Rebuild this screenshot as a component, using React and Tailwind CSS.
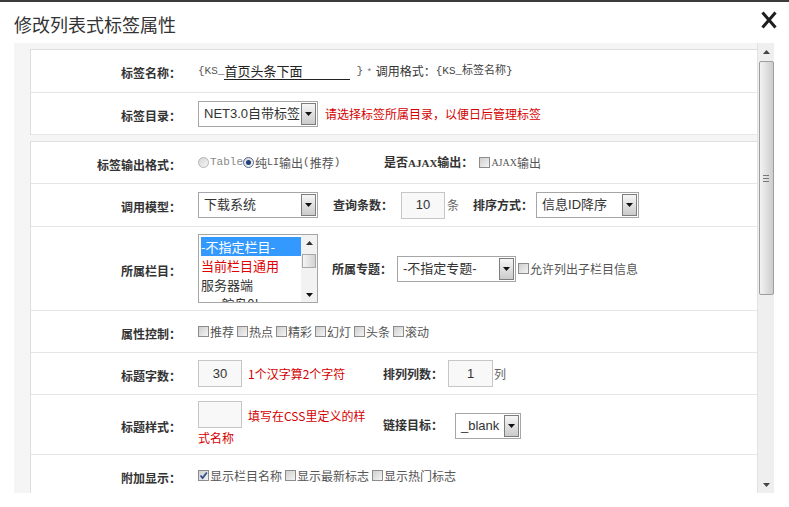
import React from "react";

const mono = "font-['Liberation_Mono','Noto_Sans_CJK_SC',monospace]";

function Arrow() {
  return (
    <svg width="7" height="4" viewBox="0 0 7 4">
      <path d="M0 0h7L3.5 4z" fill="#111" />
    </svg>
  );
}

function Select({ w, value }) {
  return (
    <div className={`flex h-[26px] shrink-0 border border-[#a6a6a6] bg-white ${w}`}>
      <div className="flex-1 overflow-hidden whitespace-nowrap pl-[5px] font-['Liberation_Sans','Noto_Sans_CJK_SC',sans-serif] text-[13px] leading-[24px] text-[#333]">
        {value}
      </div>
      <div className="m-px flex w-[15px] items-center justify-center border border-[#7d7d7d] bg-linear-to-b from-[#f6f6f6] to-[#cbcbcb]">
        <Arrow />
      </div>
    </div>
  );
}

function Input({ w = "w-[44px]", value }) {
  return (
    <div
      className={`flex h-[27px] shrink-0 items-center justify-center border border-[#c6c6c6] bg-[#f8f8f8] font-['Liberation_Sans',sans-serif] text-[13px] text-[#333] ${w}`}
    >
      {value}
    </div>
  );
}

function Check({ checked }) {
  return (
    <span className="mr-px inline-flex h-[11px] w-[11px] shrink-0 items-center justify-center border border-[#8c8c8c] bg-linear-to-br from-[#cfcfcf] to-[#f4f4f4]">
      {checked && (
        <svg width="9" height="9" viewBox="0 0 9 9">
          <path d="M1.5 4.5L3.6 7L7.8 1.5" stroke="#2c4f8e" strokeWidth="1.8" fill="none" />
        </svg>
      )}
    </span>
  );
}

function Radio({ checked }) {
  return (
    <span
      className={`inline-flex h-[11px] w-[11px] shrink-0 items-center justify-center rounded-full border bg-linear-to-br from-[#d6d6d6] to-[#f6f6f6] ${
        checked ? "border-[#56698c]" : "border-[#b4b4b4]"
      }`}
    >
      {checked && <span className="h-[5px] w-[5px] rounded-full bg-[#1d3f7c]" />}
    </span>
  );
}

function Label({ children, className = "" }) {
  return (
    <span className={`shrink-0 whitespace-nowrap text-[12px] font-bold text-[#333] ${className}`}>
      {children}
    </span>
  );
}

function Row({ label, h, children }) {
  return (
    <div className={`flex items-center border-b border-[#e6e6e6] ${h}`}>
      <div className="w-[160px] shrink-0 pr-[10px] text-right">
        <Label>{label}</Label>
      </div>
      <div className="flex flex-1 items-center pl-[7px] text-[12px] text-[#555]">{children}</div>
    </div>
  );
}

function ListBox() {
  return (
    <div className="flex h-[69px] w-[120px] shrink-0 overflow-hidden border border-[#a6a6a6] bg-white">
      <div className="flex-1 overflow-hidden pl-[2px] pt-[2px] text-[13px] leading-[19px]">
        <div className="bg-[#3399ff] text-white">-不指定栏目-</div>
        <div className="text-[#e00000]">当前栏目通用</div>
        <div className="text-[#333]">服务器端</div>
        <div className="text-[#333]">&nbsp;&nbsp;&nbsp;—鸵鸟0!</div>
      </div>
      <div className="flex w-[16px] flex-col items-center bg-[#f2f2f2]">
        <div className="flex h-[16px] items-center justify-center">
          <svg width="7" height="4" viewBox="0 0 7 4">
            <path d="M0 4h7L3.5 0z" fill="#333" />
          </svg>
        </div>
        <div className="mt-[3px] h-[14px] w-[14px] border border-[#a8a8a8] bg-linear-to-r from-[#f4f4f4] to-[#d2d2d2]" />
        <div className="flex-1" />
        <div className="flex h-[14px] items-center justify-center">
          <Arrow />
        </div>
      </div>
    </div>
  );
}

function Scrollbar() {
  return (
    <div className="flex w-[17px] shrink-0 flex-col items-center border-l border-[#e2e2e2] bg-[#efefef]">
      <div className="flex h-[18px] items-center justify-center">
        <svg width="7" height="4" viewBox="0 0 7 4">
          <path d="M0 4h7L3.5 0z" fill="#444" />
        </svg>
      </div>
      <div className="flex h-[234px] w-[15px] items-center justify-center rounded-[2px] border border-[#9e9e9e] bg-linear-to-r from-[#f2f2f2] to-[#cdcdcd]">
        <div className="flex flex-col gap-[2px]">
          <span className="h-px w-[6px] bg-[#777]" />
          <span className="h-px w-[6px] bg-[#777]" />
          <span className="h-px w-[6px] bg-[#777]" />
        </div>
      </div>
      <div className="flex-1" />
      <div className="flex h-[16px] items-center justify-center">
        <svg width="7" height="4" viewBox="0 0 7 4">
          <path d="M0 0h7L3.5 4z" fill="#444" />
        </svg>
      </div>
    </div>
  );
}

export default function App() {
  const attrs = ["推荐", "热点", "精彩", "幻灯", "头条", "滚动"];
  return (
    <div className="relative h-[507px] w-[789px] overflow-hidden bg-white font-['Noto_Sans_CJK_SC',sans-serif]">
      <div className="h-[2px] bg-[#3b3b3b]" />
      <div className="flex h-[41px] items-center justify-between pl-[14px] pr-[11px] pt-[3px]">
        <h1 className="text-[18px] font-normal leading-none text-[#333]">修改列表式标签属性</h1>
        <svg width="18" height="18" viewBox="0 0 18 18" className="-mt-[8px]">
          <path d="M2.5 1.5L15.5 16.5M15.5 1.5L2.5 16.5" stroke="#1e1e1e" strokeWidth="3" />
        </svg>
      </div>

      <div className="ml-[14px] flex h-[450px] w-[760px]">
        <div className="flex-1 overflow-hidden bg-[#f5f5f5] pl-[16px] pt-[6px]">
          <div className="border-l border-t border-[#dedede] bg-white">
            <Row label="标签名称：" h="h-[43px]">
              <span className={`${mono} text-[11px] text-[#555]`}>{"{KS_"}</span>
              <span className="w-[126px] border-b border-[#222] text-[13px] leading-[17px] text-[#222]">首页头条下面</span>
              <span className={`${mono} ml-[6px] text-[11px] text-[#555]`}>{"}"}</span>
              <span className="ml-[4px] text-[10px] text-[#888]">*</span>
              <span className="ml-[4px] text-[12px] text-[#333]">调用格式：</span>
              <span className={`${mono} text-[11px] text-[#444]`}>{"{KS_标签名称}"}</span>
            </Row>
            <Row label="标签目录：" h="h-[42px]">
              <Select w="w-[120px]" value="NET3.0自带标签" />
              <span className="ml-[7px] text-[12px] text-[#d40000]">请选择标签所属目录，以便日后管理标签</span>
            </Row>
          </div>

          <div className="mt-[6px] border-l border-t border-[#dedede] bg-white">
            <Row label="标签输出格式：" h="h-[42px]">
              <div className="flex w-[186px] shrink-0 items-center">
                <Radio />
                <span className={`${mono} ml-px text-[11px] text-[#888]`}>Table</span>
                <Radio checked />
                <span className="ml-px text-[12px] text-[#555]">纯</span>
                <span className={`${mono} text-[10px] text-[#555]`}>LI</span>
                <span className="text-[12px] text-[#555]">输出</span>
                <span className={`${mono} text-[11px] text-[#555]`}>(</span>
                <span className="text-[12px] text-[#555]">推荐</span>
                <span className={`${mono} text-[11px] text-[#555]`}>)</span>
              </div>
              <Label>
                是否<span className="font-['Liberation_Serif',serif] text-[11px]">AJAX</span>输出：
              </Label>
              <span className="ml-[6px]">
                <Check />
              </span>
              <span className="font-['Liberation_Serif',serif] text-[10px] text-[#555]">AJAX</span>
              <span className="text-[12px] text-[#555]">输出</span>
            </Row>
            <Row label="调用模型：" h="h-[43px]">
              <Select w="w-[120px]" value="下载系统" />
              <Label className="ml-[15px]">查询条数：</Label>
              <span className="ml-[8px]">
                <Input value="10" />
              </span>
              <span className="ml-[2px] text-[12px] text-[#666]">条</span>
              <Label className="ml-[14px]">排序方式：</Label>
              <span className="ml-[3px]">
                <Select w="w-[103px]" value="信息ID降序" />
              </span>
            </Row>
            <Row label="所属栏目：" h="h-[84px]">
              <ListBox />
              <Label className="ml-[14px]">所属专题：</Label>
              <span className="ml-[5px]">
                <Select w="w-[119px]" value="-不指定专题-" />
              </span>
              <span className="ml-[2px]">
                <Check />
              </span>
              <span className="text-[12px] text-[#555]">允许列出子栏目信息</span>
            </Row>
            <Row label="属性控制：" h="h-[42px]">
              {attrs.map((a) => (
                <span key={a} className="mr-[3px] flex items-center">
                  <Check />
                  <span className="text-[12px] text-[#555]">{a}</span>
                </span>
              ))}
            </Row>
            <Row label="标题字数：" h="h-[42px]">
              <div className="flex w-[185px] shrink-0 items-center">
                <Input value="30" />
                <span className="ml-[6px] text-[12px] text-[#d40000]">1个汉字算2个字符</span>
              </div>
              <Label>排列列数：</Label>
              <span className="ml-[5px]">
                <Input w="w-[45px]" value="1" />
              </span>
              <span className="ml-[1px] text-[12px] text-[#666]">列</span>
            </Row>
            <Row label="标题样式：" h="h-[60px]">
              <div className="flex w-[185px] shrink-0 flex-col">
                <div className="flex items-center">
                  <Input value="" />
                  <span className="ml-[6px] mt-[3px] text-[12px] text-[#d40000]">填写在CSS里定义的样</span>
                </div>
                <span className="text-[12px] leading-[20px] text-[#d40000]">式名称</span>
              </div>
              <Label>链接目标：</Label>
              <span className="ml-[12px] mt-[2px]">
                <Select w="w-[66px]" value="_blank" />
              </span>
            </Row>
            <Row label="附加显示：" h="h-[42px]">
              <Check checked />
              <span className="mr-[3px] text-[12px] text-[#555]">显示栏目名称</span>
              <Check />
              <span className="mr-[3px] text-[12px] text-[#555]">显示最新标志</span>
              <Check />
              <span className="text-[12px] text-[#555]">显示热门标志</span>
            </Row>
          </div>
        </div>
        <Scrollbar />
      </div>
    </div>
  );
}
